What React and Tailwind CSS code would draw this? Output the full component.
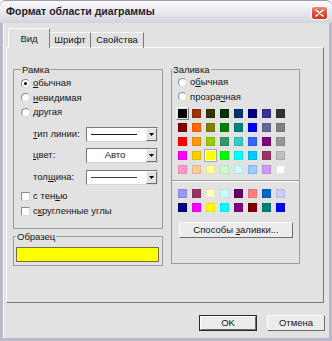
import React from 'react';

const basic = [
  'bg-[#000000]', 'bg-[#993300]', 'bg-[#333300]', 'bg-[#003300]', 'bg-[#003366]', 'bg-[#000080]', 'bg-[#333399]', 'bg-[#333333]',
  'bg-[#800000]', 'bg-[#ff6600]', 'bg-[#808000]', 'bg-[#008000]', 'bg-[#008080]', 'bg-[#0000ff]', 'bg-[#666699]', 'bg-[#808080]',
  'bg-[#ff0000]', 'bg-[#ff9900]', 'bg-[#99cc00]', 'bg-[#339966]', 'bg-[#33cccc]', 'bg-[#3366ff]', 'bg-[#800080]', 'bg-[#969696]',
  'bg-[#ff00ff]', 'bg-[#ffcc00]', 'bg-[#ffff00]', 'bg-[#00ff00]', 'bg-[#00ffff]', 'bg-[#00ccff]', 'bg-[#993366]', 'bg-[#c0c0c0]',
  'bg-[#ff99cc]', 'bg-[#ffcc99]', 'bg-[#ffff99]', 'bg-[#ccffcc]', 'bg-[#ccffff]', 'bg-[#99ccff]', 'bg-[#cc99ff]', 'bg-[#ffffff]',
];

const chart = [
  'bg-[#9999ff]', 'bg-[#993366]', 'bg-[#ffffcc]', 'bg-[#ccffff]', 'bg-[#660066]', 'bg-[#ff8080]', 'bg-[#0066cc]', 'bg-[#ccccff]',
  'bg-[#000080]', 'bg-[#ff00ff]', 'bg-[#ffff00]', 'bg-[#00ffff]', 'bg-[#800080]', 'bg-[#800000]', 'bg-[#008080]', 'bg-[#0000ff]',
];

// подчёркнутая буква-акселератор
function Acc({ text, at }) {
  if (at == null) return text;
  return (
    <>
      {text.slice(0, at)}
      <span className="underline underline-offset-[1px]">{text[at]}</span>
      {text.slice(at + 1)}
    </>
  );
}

function Radio({ label, at, checked }) {
  return (
    <div className="flex h-[14.5px] items-center gap-[3px] whitespace-nowrap">
      <span className="flex h-[9px] w-[9px] items-center justify-center rounded-full border border-[#8c8c8c] border-b-[#d8d8d8] border-r-[#d8d8d8] bg-white">
        {checked && <span className="h-[3px] w-[3px] rounded-full bg-black" />}
      </span>
      <span>
        <Acc text={label} at={at} />
      </span>
    </div>
  );
}

function Check({ label, at }) {
  return (
    <div className="flex h-[15px] items-center gap-[3px] whitespace-nowrap">
      <span className="h-[9px] w-[9px] border border-[#8c8c8c] border-b-[#d8d8d8] border-r-[#d8d8d8] bg-white" />
      <span>
        <Acc text={label} at={at} />
      </span>
    </div>
  );
}

function Combo({ children }) {
  return (
    <div className="flex h-[15px] w-[72px] border border-[#7a7a7a] border-b-[#d4d4d4] border-r-[#d4d4d4] bg-white">
      <div className="flex flex-1 items-center justify-center">{children}</div>
      <div className="flex w-[11px] items-center justify-center border border-[#f4f4f4] border-b-[#6e6e6e] border-r-[#6e6e6e] bg-[#e2e2e2]">
        <svg width="5" height="3" viewBox="0 0 5 3">
          <path d="M0 0h5L2.5 3z" fill="#000" />
        </svg>
      </div>
    </div>
  );
}

function ComboRow({ label, at, children }) {
  return (
    <div className="flex h-[15px] items-center">
      <span className="w-[65px] whitespace-nowrap pl-[12px]">
        <Acc text={label} at={at} />
      </span>
      <Combo>{children}</Combo>
    </div>
  );
}

function Group({ title, className, children }) {
  return (
    <fieldset className={`border border-[#9c9c9c] ${className}`}>
      <legend className="px-[1px] leading-[11px]">{title}</legend>
      {children}
    </fieldset>
  );
}

function Swatch({ cls, mark }) {
  if (mark === 'sunk') {
    return (
      <div className="flex h-[14px] items-center justify-center">
        <div className="flex h-[13px] w-[13px] items-center justify-center border border-[#f8f8f8] border-b-[#7c7c7c] border-r-[#7c7c7c]">
          <div className={`h-[9px] w-[9px] ${cls}`} />
        </div>
      </div>
    );
  }
  if (mark === 'white') {
    return (
      <div className="flex h-[14px] items-center justify-center">
        <div className="flex h-[13px] w-[13px] items-center justify-center border border-[#a8a8a8] bg-white">
          <div className={`h-[9px] w-[9px] ${cls}`} />
        </div>
      </div>
    );
  }
  return (
    <div className="flex h-[14px] items-center justify-center">
      <div className={`h-[9px] w-[9px] border border-black/10 ${cls}`} />
    </div>
  );
}

function Btn({ children, primary, className = '' }) {
  return (
    <div className={`${primary ? 'border border-[#2a2a2a]' : ''} ${className}`}>
      <div className="flex h-full items-center justify-center border border-white border-b-[#6c6c6c] border-r-[#6c6c6c] bg-[#ececec]">
        {children}
      </div>
    </div>
  );
}

export default function App() {
  return (
    <div className="flex h-[341px] w-[332px] flex-col rounded-t-[6px] bg-[#b9b9c9] font-['Liberation_Sans',Arial,sans-serif] text-[9.5px] text-[#151515]">
      {/* заголовок */}
      <div className="flex h-[23px] items-center justify-between rounded-t-[6px] border-t border-[#9a9aac] bg-gradient-to-b from-[#fbfbfd] via-[#e9e9ef] to-[#d3d3dd] pl-[6px] pr-[4px]">
        <span className="text-[10.5px] font-bold text-[#1e1e2a]">Формат области диаграммы</span>
        <div className="mt-[2px] flex h-[14px] w-[17px] items-center justify-center rounded-[3px] border border-white bg-gradient-to-b from-[#e98a78] via-[#d9543a] to-[#c13a22]">
          <svg width="9" height="8" viewBox="0 0 9 8">
            <path d="M1 1l7 6M8 1L1 7" stroke="#fff" strokeWidth="1.6" strokeLinecap="round" />
          </svg>
        </div>
      </div>

      <div className="mx-[3px] mb-[3px] flex flex-1 flex-col border-l border-white bg-[#e2e2e2]">
        {/* вкладки */}
        <div className="relative z-10 mt-[5px] ml-[4px] flex h-[20px] items-end -mb-[1px]">
          <div className="flex h-[20px] w-[42px] items-center justify-center border-l border-t border-r border-white border-r-[#7a7a7a] bg-[#e2e2e2] pt-[1px]">
            Вид
          </div>
          <div className="flex h-[16px] w-[41px] items-center justify-center border-t border-r border-white border-r-[#7a7a7a]">
            Шрифт
          </div>
          <div className="flex h-[16px] w-[53px] items-center justify-center border-t border-r border-white border-r-[#7a7a7a]">
            Свойства
          </div>
        </div>

        {/* панель */}
        <div className="ml-[2px] mr-[5px] flex h-[256px] gap-[8px] border border-white border-b-[#7a7a7a] border-r-[#7a7a7a] pl-[6px] pt-[16px]">
          <div className="flex w-[150px] flex-col">
            <Group title="Рамка" className="h-[165px] pl-[7px]">
              <div className="mt-[1px]">
                <Radio label="обычная" at={0} checked />
                <Radio label="невидимая" at={0} />
                <Radio label="другая" at={0} />
              </div>
              <div className="mt-[7px] flex flex-col gap-[6.5px]">
                <ComboRow label="тип линии:" at={0}>
                  <div className="ml-[-6px] h-px w-[46px] bg-[#1a1a1a]" />
                </ComboRow>
                <ComboRow label="цвет:" at={0}>
                  <span className="ml-[-3px]">Авто</span>
                </ComboRow>
                <ComboRow label="толщина:" at={3}>
                  <div className="ml-[-6px] h-px w-[46px] bg-[#3a3a3a]" />
                </ComboRow>
              </div>
              <div className="mt-[4px]">
                <Check label="с тенью" at={5} />
                <Check label="скругленные углы" at={1} />
              </div>
            </Group>
            <Group title="Образец" className="mt-[2px] h-[35px] pl-[2px] pr-[3px]">
              <div className="mt-[5px] h-[15px] border border-[#6f6f4a] bg-[#ffff00]" />
            </Group>
          </div>

          <Group title="Заливка" className="h-[200px] w-[129px]">
            <div className="pl-[6px]">
              <Radio label="обычная" at={1} />
              <Radio label="прозрачная" at={6} />
            </div>
            <div className="mt-[2px] grid w-[115px] grid-cols-8 pl-[3px]">
              {basic.map((c, i) => (
                <Swatch key={i} cls={c} mark={i === 0 ? 'sunk' : i === 26 ? 'white' : null} />
              ))}
            </div>
            <div className="mt-[4px] h-[2px] border-t border-[#9c9c9c] border-b border-b-white" />
            <div className="mt-[4px] grid w-[115px] grid-cols-8 pl-[3px]">
              {chart.map((c, i) => (
                <Swatch key={i} cls={c} />
              ))}
            </div>
            <Btn className="ml-[7px] mt-[8px] h-[16px] w-[114px]">
              <span>
                Способы <Acc text="заливки..." at={0} />
              </span>
            </Btn>
          </Group>
        </div>

        {/* кнопки */}
        <div className="mt-[12px] flex justify-end gap-[10px] pr-[4px]">
          <Btn primary className="h-[16px] w-[58px]">
            OK
          </Btn>
          <Btn className="h-[16px] w-[58px]">Отмена</Btn>
        </div>
      </div>
    </div>
  );
}
